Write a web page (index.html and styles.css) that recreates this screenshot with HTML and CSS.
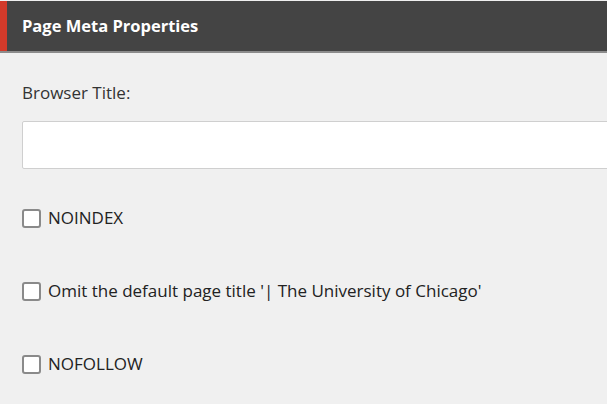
FILE: index.html
```html
<!DOCTYPE html>
<html>
<head>
<meta charset="utf-8">
<link rel="stylesheet" href="styles.css">
</head>
<body>
<div class="panel">
  <div class="header">
    <div class="accent"></div>
    <div class="title">Page Meta Properties</div>
  </div>
  <div class="body">
    <label class="field-label">Browser Title:</label>
    <div class="input"></div>
    <div class="check"><span class="box"></span><span class="text">NOINDEX</span></div>
    <div class="check"><span class="box"></span><span class="text">Omit the default page title '| The University of Chicago'</span></div>
    <div class="check"><span class="box"></span><span class="text">NOFOLLOW</span></div>
  </div>
</div>
</body>
</html>
```
FILE: styles.css
```css
html, body {
  margin: 0;
  padding: 0;
  background: #f0f0f0;
  font-family: "Open Sans", "Liberation Sans", sans-serif;
  color: #333;
}
.panel {
  width: 607px;
  height: 404px;
  overflow: hidden;
}
.header {
  display: flex;
  height: 50px;
  margin-top: 1px;
  background: #444444;
  border-bottom: 2px solid #8c8c8c;
}
.accent {
  width: 7px;
  background: #d23a2a;
}
.title {
  color: #fff;
  font-weight: 700;
  font-size: 16.5px;
  line-height: 50px;
  padding-left: 15px;
}
.body {
  padding: 0 0 0 22px;
  display: flex;
  flex-direction: column;
}
.field-label {
  font-size: 17px;
  line-height: 20px;
  margin-top: 30px;
}
.input {
  margin-top: 18px;
  height: 46px;
  width: 620px;
  background: #fff;
  border: 1px solid #cfcfcf;
  border-radius: 2px;
}
.check {
  display: flex;
  align-items: center;
  gap: 7px;
  font-size: 17px;
  line-height: 20px;
  margin-top: 39px;
}
.check + .check {
  margin-top: 53px;
}
.box {
  width: 15px;
  height: 15px;
  border: 2px solid #8a8a8a;
  border-radius: 3px;
  background: #fff;
}
.text {
  color: #222;
}
```
